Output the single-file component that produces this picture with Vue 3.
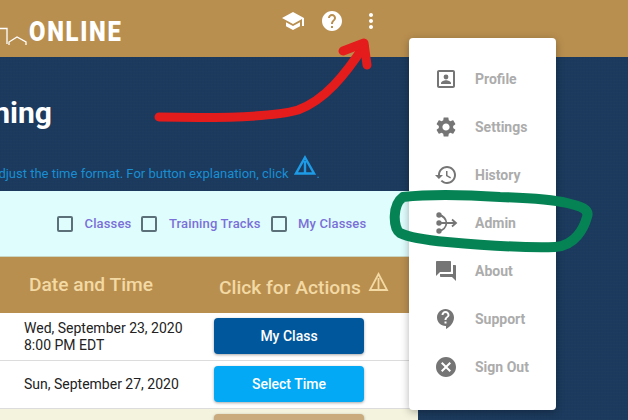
<template>
  <div class="page">
    <header class="topbar">
      <div class="brand">
        <svg class="skyline" width="29" height="20" viewBox="0 0 29 20">
          <path d="M0 1.5H7V17M9 18V15L17 10L26 15V18" fill="none" stroke="#fff" stroke-width="1.3" />
        </svg>
        <span class="brand-name">ONLINE</span>
      </div>
      <div class="top-icons">
        <svg class="top-icon" viewBox="0 0 24 24"><path d="M5 13.18v4L12 21l7-3.82v-4L12 17l-7-3.82zM12 3L1 9l11 6 9-4.91V17h2V9L12 3z" /></svg>
        <svg class="top-icon" viewBox="0 0 24 24"><path d="M12 2C6.48 2 2 6.48 2 12s4.48 10 10 10 10-4.48 10-10S17.52 2 12 2zm1 17h-2v-2h2v2zm2.07-7.75l-.9.92C13.45 12.9 13 13.5 13 15h-2v-.5c0-1.1.45-2.1 1.17-2.83l1.24-1.26c.37-.36.59-.86.59-1.41 0-1.1-.9-2-2-2s-2 .9-2 2H8c0-2.21 1.79-4 4-4s4 1.79 4 4c0 .88-.36 1.68-.93 2.25z" /></svg>
        <svg class="top-icon" viewBox="0 0 24 24"><path d="M12 8c1.1 0 2-.9 2-2s-.9-2-2-2-2 .9-2 2 .9 2 2 2zm0 2c-1.1 0-2 .9-2 2s.9 2 2 2 2-.9 2-2-.9-2-2-2zm0 6c-1.1 0-2 .9-2 2s.9 2 2 2 2-.9 2-2-.9-2-2-2z" /></svg>
      </div>
    </header>

    <main class="content">
      <h1 class="title"><span>Training</span></h1>
      <p class="hint">
        <span>You can adjust the time format. For button explanation, click</span>
        <svg class="hint-icon" width="22" height="20" viewBox="0 0 22 20"><path d="M11 2.5L20 18.5H2zM11 6V18" fill="none" stroke="#1e9be6" stroke-width="2.4" /></svg>
        <span>.</span>
      </p>

      <section class="panel">
        <div class="filters">
          <label v-for="f in filters" :key="f" class="filter">
            <i class="box"></i>
            <span>{{ f }}</span>
          </label>
        </div>
        <div class="table-head">
          <div class="col-date">Date and Time</div>
          <div class="col-action">
            <span>Click for Actions</span>
            <svg class="head-icon" width="21" height="20" viewBox="0 0 21 20"><path d="M10.5 2L19 18H2zM10.5 6V18" fill="none" stroke="#f3d9a4" stroke-width="1.8" /></svg>
          </div>
        </div>
        <div v-for="row in rows" :key="row.date" class="row" :class="row.cls">
          <div class="cell-date">
            <div>{{ row.date }}</div>
            <div v-if="row.time">{{ row.time }}</div>
          </div>
          <button class="btn" :class="row.btn">{{ row.label }}</button>
        </div>
      </section>
    </main>

    <nav class="menu">
      <div v-for="item in menu" :key="item.label" class="menu-item">
        <svg class="menu-icon" viewBox="0 0 24 24" v-html="item.icon"></svg>
        <span>{{ item.label }}</span>
      </div>
    </nav>

    <svg class="marks" width="628" height="420" viewBox="0 0 628 420">
      <path d="M159 117C205 118 270 118 298 110C325 100 345 75 364 46" fill="none" stroke="#e51c1c" stroke-width="9" stroke-linecap="round" />
      <path d="M343 51L364 43L367 65" fill="none" stroke="#e51c1c" stroke-width="9" stroke-linecap="round" stroke-linejoin="round" />
      <path d="M403 197C430 194 470 195 500 197C530 198 550 199 567 203C580 206 590 209 587 217C584 228 575 246 555 247C520 248 480 245 447 242C425 240 410 238 400 233C393 228 392 205 403 197Z" fill="none" stroke="#058355" stroke-width="10" />
    </svg>
  </div>
</template>

<script setup>
const filters = ['Classes', 'Training Tracks', 'My Classes']

const rows = [
  { date: 'Wed, September 23, 2020', time: '8:00 PM EDT', label: 'My Class', btn: 'btn-navy', cls: '' },
  { date: 'Sun, September 27, 2020', time: '', label: 'Select Time', btn: 'btn-sky', cls: '' },
  { date: 'Mon, September 28, 2020', time: '', label: '', btn: 'btn-tan', cls: 'row-alt' }
]

const menu = [
  { label: 'Profile', icon: '<path fill-rule="evenodd" d="M3 5c0-1.1.9-2 2-2h14c1.1 0 2 .9 2 2v14c0 1.1-.9 2-2 2H5c-1.1 0-2-.9-2-2zM5 5v14h14V5z"/><circle cx="12" cy="10" r="2.4"/><path d="M7 17v-.8c0-1.9 3.2-2.9 5-2.9s5 1 5 2.9v.8z"/>' },
  { label: 'Settings', icon: '<path d="M19.14 12.94c.04-.3.06-.61.06-.94 0-.32-.02-.64-.07-.94l2.03-1.58c.18-.14.23-.41.12-.61l-1.92-3.32c-.12-.22-.37-.29-.59-.22l-2.39.96c-.5-.38-1.03-.7-1.62-.94l-.36-2.54c-.04-.24-.24-.41-.48-.41h-3.84c-.24 0-.43.17-.47.41l-.36 2.54c-.59.24-1.13.57-1.62.94l-2.39-.96c-.22-.08-.47 0-.59.22L2.74 8.87c-.12.21-.08.47.12.61l2.03 1.58c-.05.3-.09.63-.09.94s.02.64.07.94l-2.03 1.58c-.18.14-.23.41-.12.61l1.92 3.32c.12.22.37.29.59.22l2.39-.96c.5.38 1.03.7 1.62.94l.36 2.54c.05.24.24.41.48.41h3.84c.24 0 .44-.17.47-.41l.36-2.54c.59-.24 1.13-.56 1.62-.94l2.39.96c.22.08.47 0 .59-.22l1.92-3.32c.12-.22.07-.47-.12-.61l-2.01-1.58zM12 15.6c-1.98 0-3.6-1.62-3.6-3.6s1.62-3.6 3.6-3.6 3.6 1.62 3.6 3.6-1.62 3.6-3.6 3.6z"/>' },
  { label: 'History', icon: '<path d="M13 3c-4.97 0-9 4.03-9 9H1l3.89 3.89.07.14L9 12H6c0-3.87 3.13-7 7-7s7 3.13 7 7-3.13 7-7 7c-1.93 0-3.68-.79-4.94-2.06l-1.42 1.42C8.27 19.99 10.51 21 13 21c4.97 0 9-4.03 9-9s-4.03-9-9-9zm-1 5v5l4.28 2.54.72-1.21-3.5-2.08V8H12z"/>' },
  { label: 'Admin', icon: '<circle cx="5" cy="4" r="2.7"/><circle cx="5" cy="12" r="2.7"/><circle cx="5" cy="20" r="2.7"/><path d="M5 4C10 5 12 8 12.5 12C12 16 10 19 5 20M5 12H21" fill="none" stroke="currentColor" stroke-width="1.8"/><path d="M18 8.5L22 12L18 15.5" fill="none" stroke="currentColor" stroke-width="1.8"/>' },
  { label: 'About', icon: '<path d="M21 6h-2v9H6v2c0 .55.45 1 1 1h11l4 4V7c0-.55-.45-1-1-1zm-4 6V3c0-.55-.45-1-1-1H3c-.55 0-1 .45-1 1v14l4-4h10c.55 0 1-.45 1-1z"/>' },
  { label: 'Support', icon: '<path d="M11.5 2C6.81 2 3 5.81 3 10.5S6.81 19 11.5 19h.5v3c4.86-2.34 8-7 8-11.5C20 5.81 16.19 2 11.5 2zm1 14.5h-2v-2h2v2zm0-3.5h-2c0-3.25 3-3 3-5 0-1.1-.9-2-2-2s-2 .9-2 2h-2c0-2.21 1.79-4 4-4s4 1.79 4 4c0 2.5-3 2.75-3 5z"/>' },
  { label: 'Sign Out', icon: '<path d="M12 2C6.47 2 2 6.47 2 12s4.47 10 10 10 10-4.47 10-10S17.53 2 12 2zm5 13.59L15.59 17 12 13.41 8.41 17 7 15.59 10.59 12 7 8.41 8.41 7 12 10.59 15.59 7 17 8.41 13.41 12 17 15.59z"/>' }
]
</script>

<style>
html, body {
  overflow: hidden;
}
</style>

<style scoped>
.page {
  position: relative;
  width: 628px;
  height: 420px;
  overflow: hidden;
  display: flex;
  flex-direction: column;
  font-family: Roboto, "Liberation Sans", sans-serif;
  background-color: #1b3a5d;
  background-image:
    repeating-linear-gradient(0deg, rgba(255, 255, 255, 0.008) 0 1px, transparent 1px 3px),
    repeating-linear-gradient(90deg, rgba(0, 0, 0, 0.015) 0 1px, transparent 1px 3px);
}
.topbar {
  height: 57px;
  flex: none;
  display: flex;
  justify-content: space-between;
  background: #b98f4f;
}
.brand {
  display: flex;
  align-items: flex-start;
  padding-top: 18px;
}
.skyline {
  margin-top: 9px;
  flex: none;
}
.brand-name {
  display: inline-block;
  transform: scaleX(0.85);
  transform-origin: left center;
  font-size: 28px;
  font-weight: 900;
  line-height: 28px;
  letter-spacing: 2px;
  color: #fff;
}
.top-icons {
  display: flex;
  align-items: flex-start;
  gap: 15px;
  padding: 9px 245px 0 0;
}
.top-icon {
  width: 24px;
  height: 24px;
  fill: #fff;
}
.content {
  flex: 1;
  width: 418px;
  display: flex;
  flex-direction: column;
}
.title {
  width: 52px;
  height: 36px;
  margin: 38px 0 0;
  display: flex;
  justify-content: flex-end;
  overflow: hidden;
  font-size: 30px;
  line-height: 36px;
  font-weight: 700;
  color: #fff;
  white-space: nowrap;
}
.title span {
  flex: none;
}
.hint {
  width: 320px;
  height: 28px;
  margin: 24px 0 0;
  display: flex;
  justify-content: flex-end;
  align-items: flex-end;
  overflow: hidden;
  font-size: 13px;
  line-height: 18px;
  color: #1a8ed2;
  white-space: nowrap;
}
.hint span {
  flex: none;
}
.hint-icon {
  flex: none;
  margin: 0 1px 8px 5px;
}
.panel {
  margin-top: 8px;
}
.filters {
  height: 66px;
  box-sizing: border-box;
  padding-left: 57px;
  display: flex;
  align-items: center;
  gap: 10px;
  background: #e0fdfd;
  border-bottom: 1px solid #c9d6c4;
}
.filter {
  display: flex;
  align-items: center;
  gap: 11.5px;
  font-size: 13px;
  letter-spacing: 0.15px;
  font-weight: 500;
  color: #7a70d8;
}
.box {
  width: 12px;
  height: 12px;
  border: 2px solid #5b7078;
  border-radius: 2px;
}
.table-head {
  height: 56px;
  display: flex;
  background: #b98f4f;
  color: #f3d9a4;
  font-weight: 500;
}
.col-date {
  width: 219px;
  box-sizing: border-box;
  padding: 17px 0 0 29px;
  font-size: 19.2px;
  line-height: 22px;
}
.col-action {
  display: flex;
  align-items: flex-start;
  gap: 7px;
  padding-top: 19px;
  font-size: 19.2px;
  line-height: 24px;
}
.head-icon {
  margin-top: -4px;
}
.row {
  height: 47px;
  display: flex;
  align-items: center;
  background: #fff;
  border-bottom: 1px solid #dcdcdc;
}
.row-alt {
  background: #f4f3de;
}
.cell-date {
  width: 214px;
  flex: none;
  box-sizing: border-box;
  padding-left: 24px;
  font-size: 14px;
  line-height: 17px;
  color: #222;
}
.btn {
  width: 150px;
  height: 36px;
  flex: none;
  margin-bottom: 1px;
  border: none;
  border-radius: 4px;
  font-family: inherit;
  font-size: 14px;
  font-weight: 500;
  color: #fff;
  box-shadow: 0 1px 3px rgba(0, 0, 0, 0.35);
}
.btn-navy {
  background: #01579b;
}
.btn-sky {
  background: #03a9f4;
}
.btn-tan {
  background: #c9ab7e;
}
.menu {
  position: absolute;
  left: 409px;
  top: 38px;
  width: 147px;
  height: 372px;
  box-sizing: border-box;
  padding-top: 17px;
  background: #fff;
  border-radius: 4px;
  box-shadow: 0 2px 8px rgba(0, 0, 0, 0.3);
}
.menu-item {
  height: 48px;
  display: flex;
  align-items: center;
  gap: 17px;
  padding-left: 25px;
  font-size: 14px;
  font-weight: 700;
  color: #acacac;
}
.menu-icon {
  width: 24px;
  height: 24px;
  fill: #757575;
  color: #757575;
  flex: none;
}
.marks {
  position: absolute;
  left: 0;
  top: 0;
  pointer-events: none;
}
</style>
